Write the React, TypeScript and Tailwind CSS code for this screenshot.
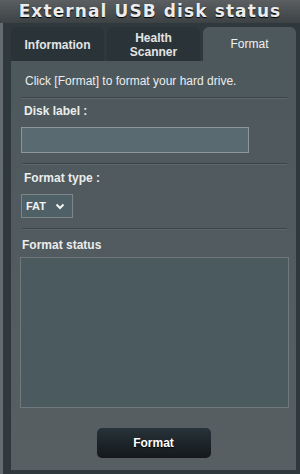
import React from "react";

const tabs = [
  { label: "Information", active: false },
  { label: "Health\nScanner", active: false },
  { label: "Format", active: true },
];

function Divider() {
  return <div className="ml-[11px] mr-[9px] h-px bg-[#3b4549] shadow-[0_1px_0_#5e676a]" />;
}

export default function App() {
  return (
    <div className="w-[300px] h-[474px] bg-[#2f393d] flex flex-col font-['Liberation_Sans',Arial,sans-serif] overflow-hidden">
      {/* HEADER */}
      <div className="h-[23px] shrink-0 flex items-center justify-center bg-gradient-to-b from-[#5b5f61] to-[#3d4244]">
        <span className="font-['DejaVu_Sans',sans-serif] font-bold text-[17px] leading-none tracking-[1.1px] text-[#ececec] [text-shadow:0_1px_1px_#000]">
          External USB disk status
        </span>
      </div>

      <div className="flex flex-1">
        {/* LEFT STRIP */}
        <div className="w-[3px] bg-[#646c6f]" />

        <div className="flex-1 flex flex-col pl-[8px] pr-[4px] pt-[4px]">
          {/* TABS */}
          <div className="flex gap-[3px] h-[34px]">
            {tabs.map((t) => (
              <div
                key={t.label}
                className={
                  t.active
                    ? "w-[93px] rounded-t-[6px] bg-[#4d585d] flex items-center justify-center text-[12px] leading-[14px] text-[#f0f0f0] text-center whitespace-pre-line"
                    : "w-[93px] rounded-t-[6px] bg-[#2a3438] flex items-center justify-center text-[12px] leading-[14px] font-bold text-[#e4e4e4] text-center whitespace-pre-line pt-[2px]"
                }
              >
                {t.label}
              </div>
            ))}
          </div>

          {/* PANEL */}
          <div className="h-[409px] bg-gradient-to-b from-[#4d585d] to-[#575f62] flex flex-col">
            <div className="pl-[14px] pt-[12px] h-[36px] text-[12px] leading-[16px] text-[#ececec]">
              Click [Format] to format your hard drive.
            </div>
            <Divider />

            <div className="pl-[13px] pt-[5px] h-[21px] text-[12px] leading-[16px] font-bold text-[#ececec]">
              Disk label :
            </div>
            <div className="ml-[10px] mt-[8px] w-[228px] h-[26px] bg-[#596b70] border border-[#8c979a]" />
            <div className="h-[10px]" />
            <Divider />

            <div className="pl-[13px] pt-[6px] h-[22px] text-[12px] leading-[16px] font-bold text-[#ececec]">
              Format type :
            </div>
            <div className="ml-[10px] mt-[8px] w-[52px] h-[24px] bg-[#4f6066] border border-[#7b8689] flex items-center pl-[4px] gap-[9px]">
              <span className="text-[11px] font-bold text-[#f2f2f2] leading-none">FAT</span>
              <svg width="10" height="7" viewBox="0 0 10 7">
                <path d="M1.5 1.5 L5 5 L8.5 1.5" stroke="#f2f2f2" strokeWidth="2" fill="none" />
              </svg>
            </div>
            <div className="h-[10px]" />
            <Divider />

            <div className="pl-[11px] pt-[8px] h-[28px] text-[12px] leading-[16px] font-bold text-[#ececec]">
              Format status
            </div>
            <div className="ml-[9px] w-[269px] h-[151px] bg-[#4b5a5f] border border-[#6f797c]" />

            <div className="flex justify-center mt-[20px]">
              <button className="w-[114px] h-[30px] rounded-[5px] bg-gradient-to-b from-[#27333a] to-[#14181a] text-[12px] font-bold text-white [text-shadow:0_1px_1px_#000]">
                Format
              </button>
            </div>
          </div>
        </div>
      </div>
    </div>
  );
}
